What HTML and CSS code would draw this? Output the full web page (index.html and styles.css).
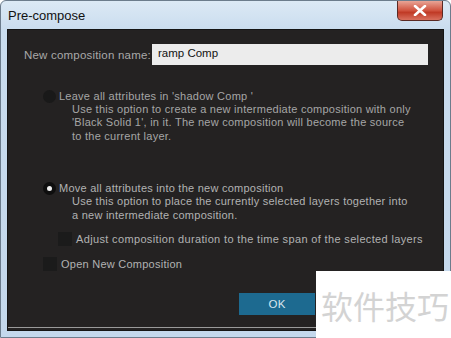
FILE: index.html
```html
<!DOCTYPE html>
<html>
<head>
<meta charset="utf-8">
<link rel="stylesheet" href="styles.css">
</head>
<body>
<div class="window">
  <div class="titlebar">
    <span class="title">Pre-compose</span>
    <div class="close"><svg width="14" height="11" viewBox="0 0 14 11"><path d="M2 1 L12 10 M12 1 L2 10" stroke="#fff" stroke-width="2.6" stroke-linecap="round"/></svg></div>
  </div>
  <div class="content">
    <div class="namerow">
      <span class="label">New composition name:</span>
      <div class="input">ramp Comp</div>
    </div>
    <div class="option first">
      <div class="optrow"><span class="radio"></span><span>Leave all attributes in 'shadow Comp '</span></div>
      <div class="desc">Use this option to create a new intermediate composition with only<br>'Black Solid 1', in it. The new composition will become the source<br>to the current layer.</div>
    </div>
    <div class="option second">
      <div class="optrow"><span class="radio on"></span><span>Move all attributes into the new composition</span></div>
      <div class="desc">Use this option to place the currently selected layers together into<br>a new intermediate composition.</div>
    </div>
    <div class="checkrow sub"><span class="check"></span><span>Adjust composition duration to the time span of the selected layers</span></div>
    <div class="checkrow"><span class="check"></span><span>Open New Composition</span></div>
    <div class="buttons"><div class="ok">OK</div></div>
  </div>
  <div class="watermark">软件技巧</div>
</div>
</body>
</html>
```
FILE: styles.css
```css
html, body { margin: 0; padding: 0; }
body { width: 451px; height: 338px; overflow: hidden; background: #fff; }
.window {
  position: relative;
  width: 451px; height: 338px;
  box-sizing: border-box;
  background: linear-gradient(#dce9f5, #c9dcee 30px, #c4d8ec);
  border-radius: 6px 6px 0 0;
  border: 1px solid #6c7c8c;
  padding: 0 6px 6px 6px;
  display: flex; flex-direction: column;
  font-family: "Liberation Sans", Arial, sans-serif;
}
.titlebar {
  height: 28px;
  display: flex; align-items: center; justify-content: space-between;
  position: relative;
}
.title { font-size: 13px; color: #111; margin-left: 1px; margin-top: 1px; }
.close {
  width: 44px; height: 19px;
  margin-top: -9px; margin-right: 1px;
  border: 1px solid #5a2a24; border-top: none;
  border-radius: 0 0 5px 5px;
  background: linear-gradient(#e8a496, #d0533f 50%, #c03a26 60%, #d9705e);
  display: flex; align-items: center; justify-content: center;
}
.content {
  flex: 1;
  background: #242222;
  border: 1px solid #151515;
  box-shadow: inset 0 -2px 0 #242222, inset 0 -3px 0 #9a9a9a;
  color: #b2b2b2;
  font-size: 11px;
  letter-spacing: 0.25px;
  padding: 14px 0 0 16px;
  display: flex; flex-direction: column;
}
.namerow { display: flex; align-items: center; height: 21px; }
.label { width: 128px; color: #a9a9a9; font-size: 11.5px; letter-spacing: 0.2px; }
.input {
  width: 276px; height: 21px; box-sizing: border-box;
  background: #ececec; color: #111; letter-spacing: 0;
  font-size: 11.5px; padding: 3px 0 0 6px;
}
.option { display: flex; flex-direction: column; }
.option.first { margin-top: 24px; color: #a6a6a6; }
.option.second { margin-top: 38px; }
.optrow { display: flex; align-items: center; height: 14px; margin-left: 19px; }
.radio {
  width: 13px; height: 13px; border-radius: 50%;
  background: #191919; margin-right: 3px; flex: none;
  position: relative;
}
.radio.on { background: #0e0e0e; }
.radio.on::after {
  content: ""; position: absolute; left: 4px; top: 4px;
  width: 5px; height: 5px; border-radius: 50%; background: #eee;
}
.desc { margin-left: 48px; line-height: 13.4px; margin-top: 0px; }
.checkrow { display: flex; align-items: center; height: 14px; margin-left: 19px; margin-top: 11px; }
.checkrow.sub { margin-left: 34px; margin-top: 10px; letter-spacing: 0.35px; }
.check { width: 14px; height: 14px; background: #1b1b1b; margin-right: 4px; flex: none; }
.buttons { display: flex; justify-content: flex-start; margin-top: 22px; margin-left: 215px; }
.ok {
  width: 76px; height: 22px; background: #1d6a90; color: #d8e6ee;
  display: flex; align-items: center; justify-content: center; font-size: 11.5px;
}
.watermark {
  position: absolute; left: 315px; top: 270px;
  width: 136px; height: 68px; background: #fff;
  color: #d3d3d3; font-size: 32px;
  font-family: "Noto Sans CJK SC", sans-serif;
  display: flex; align-items: center; justify-content: center;
  padding-left: 2px; box-sizing: border-box;
}
```
